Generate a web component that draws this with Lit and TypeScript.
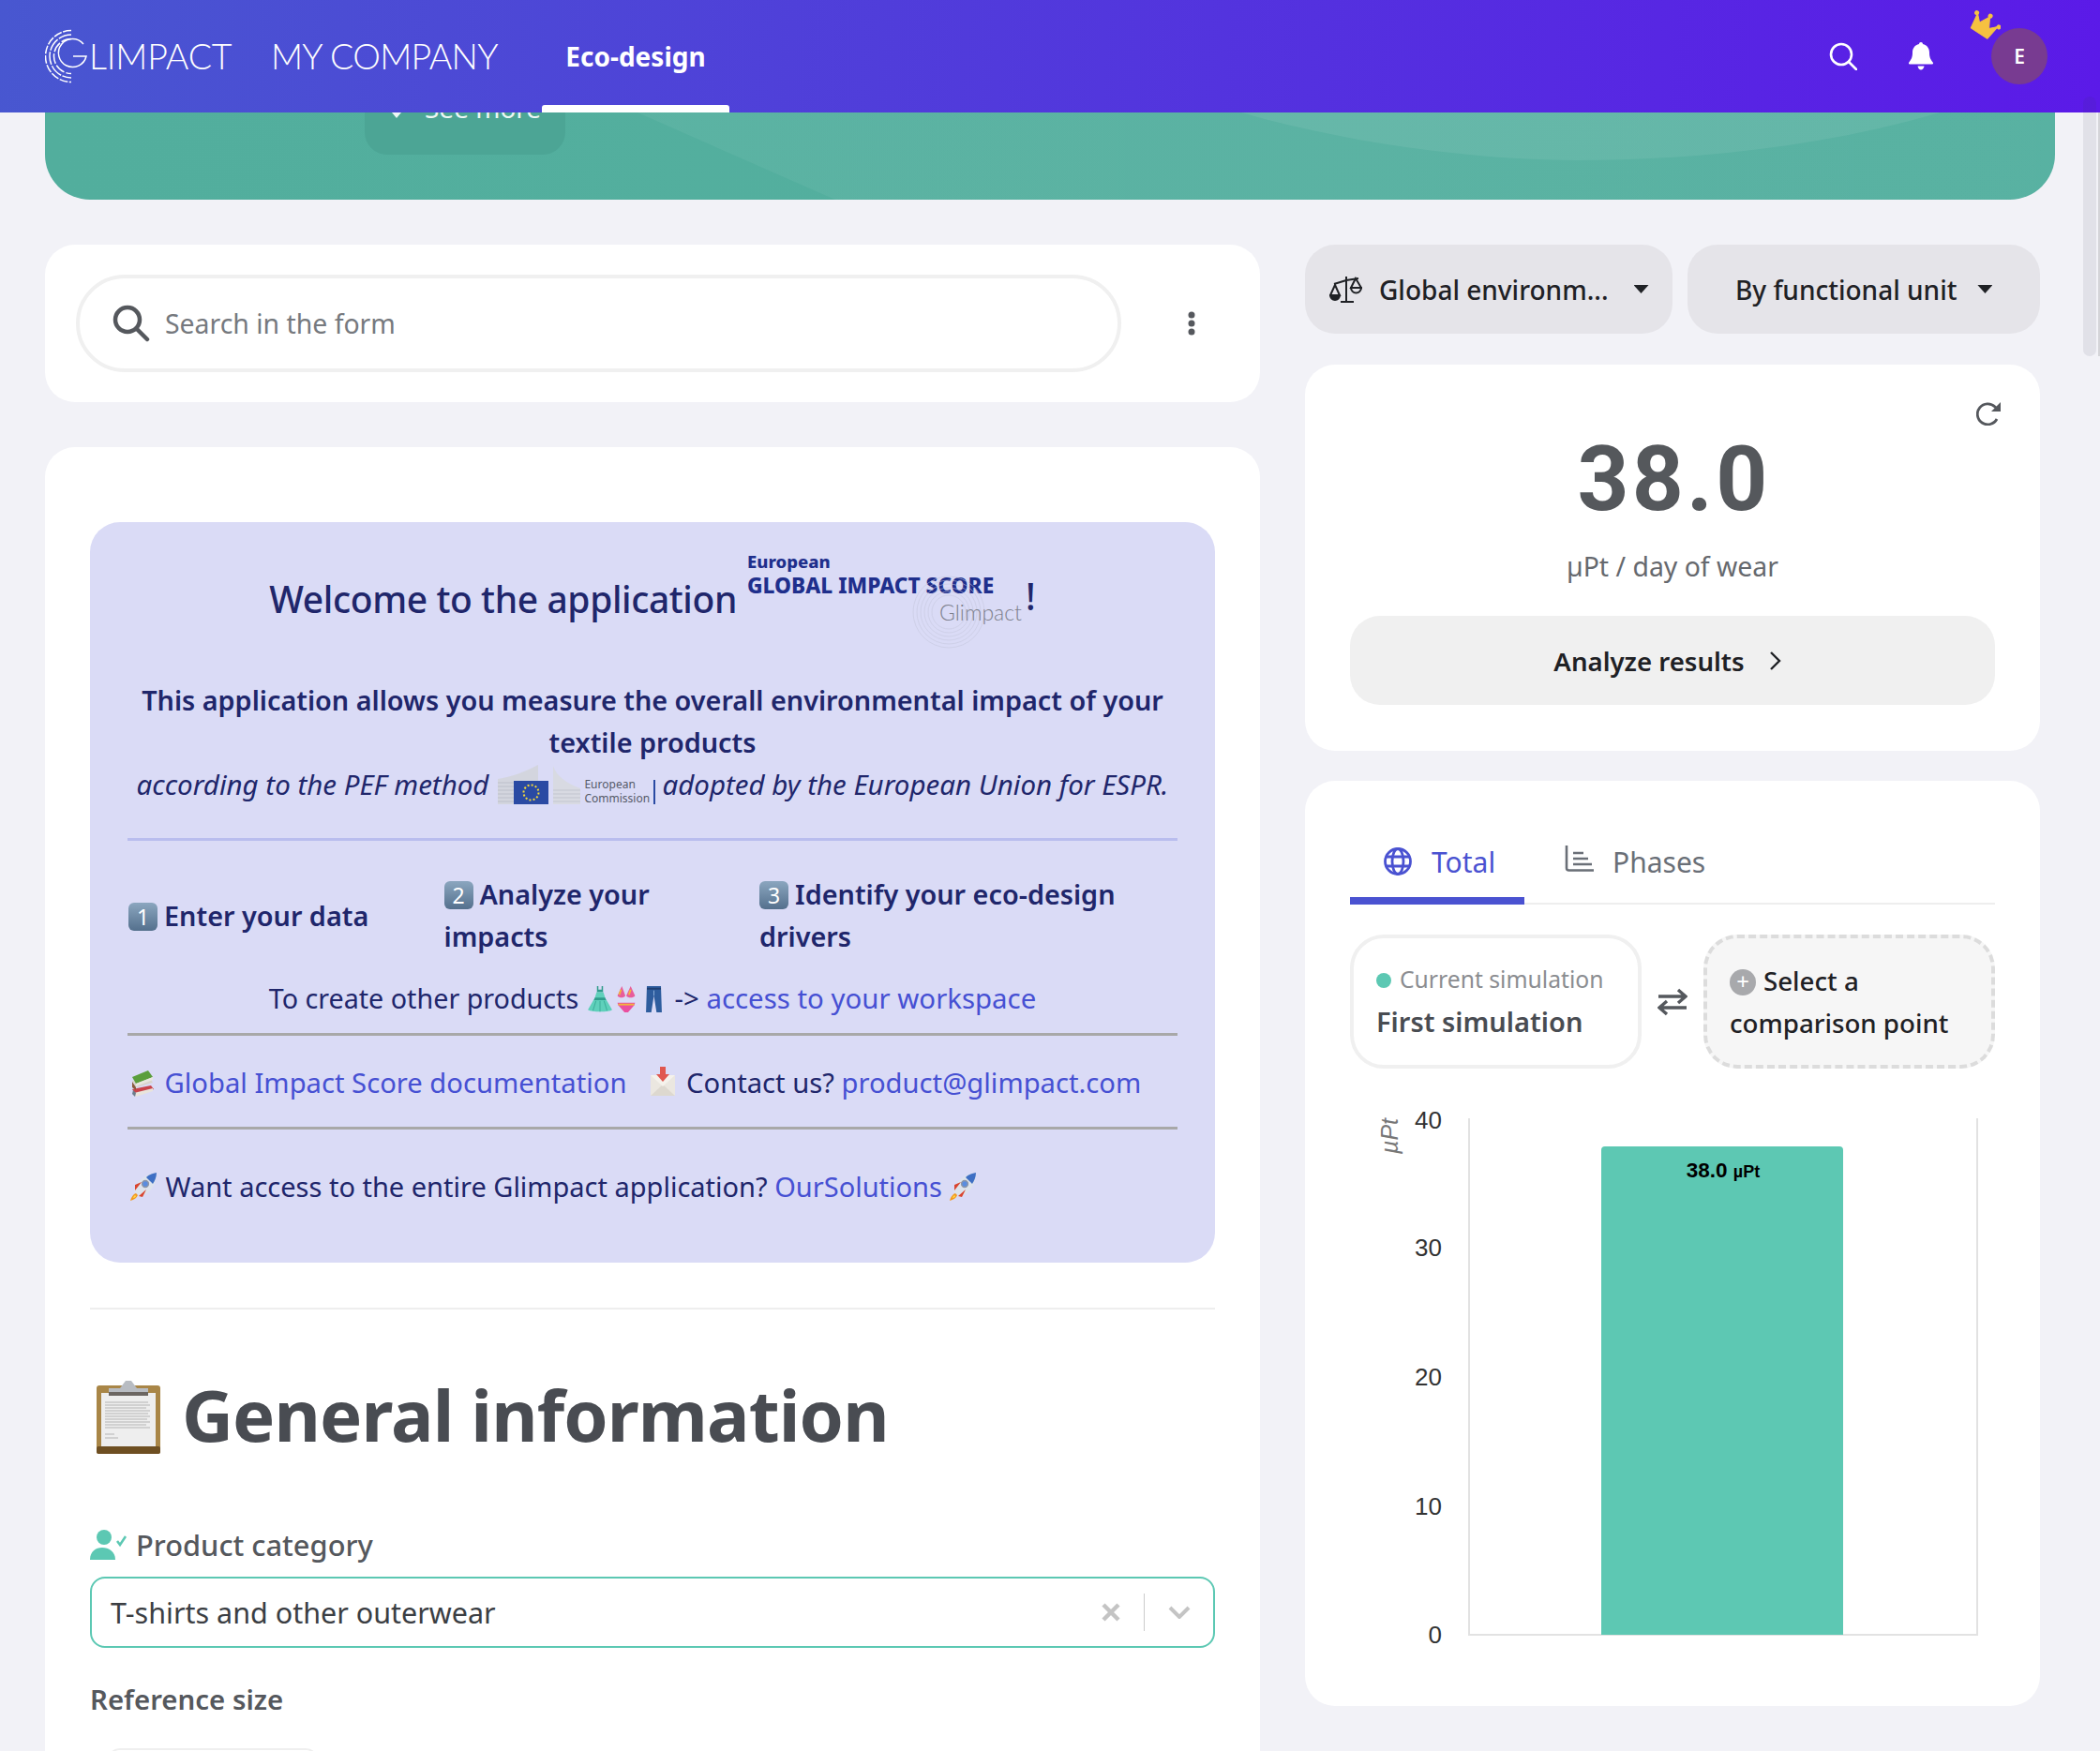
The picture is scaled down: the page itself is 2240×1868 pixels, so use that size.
import { LitElement, html, css, svg } from "lit";
import { customElement } from "lit/decorators.js";

const keycap = (n: string) => html`<span class="key">${n}</span>`;

const books = html`<svg class="emo" width="30" height="30" viewBox="0 0 30 30"><path d="M3 21l20-4 3 4-19 6z" fill="#c9434a"/><path d="M5 25l20-5 0 3-18 6z" fill="#e8e4dc"/><path d="M3 26l3 3 1-4-3-3z" fill="#6d7d8c"/><path d="M3 12l19-3 3 5-18 5z" fill="#d8d4cc"/><path d="M3 13l4 6 0 3-4-3z" fill="#8a5a3c"/><path d="M3 8L20 1l5 7-18 7z" fill="#5a9e3c"/><path d="M7 15l18-7 0 3-18 7z" fill="#e8e6df"/></svg>`;
const envelope = html`<svg class="emo" width="34" height="34" viewBox="0 0 34 34"><rect x="4" y="10" width="26" height="22" rx="1" fill="#ebe7e0"/><path d="M4 32l13-12 13 12z" fill="#ddd8cf"/><path d="M4 10l13 12 13-12z" fill="#f5f2ec"/><path d="M14 1h6v8h4l-7 8-7-8h4z" fill="#e0574f"/></svg>`;
const rocket = html`<svg class="emo" width="31" height="32" viewBox="0 0 31 32"><path d="M5 21C7 11 15 3 29 1c0 14-8 22-17 26z" fill="#dde3ec"/><path d="M29 1c-6 1-9 3-11 5 2 2 5 5 7 7 2-3 4-7 4-12z" fill="#3e6fc4"/><circle cx="17" cy="13" r="3.400" fill="#5a8de0" stroke="#8c97a8" stroke-width="1.500"/><path d="M6 14l7-3-7 9zM14 27l4-8-8 7z" fill="#d9442f"/><path d="M7 23c-3 1-5 4-6 8 4-1 7-3 8-6z" fill="#f39a1f"/><path d="M6 25c-1 1-2 2-2 3 1 0 3-1 3-2z" fill="#ffdb4d"/></svg>`;
const dress = html`<svg class="emo e1" width="28" height="30" viewBox="0 0 26 32" preserveAspectRatio="none"><path d="M10 1v7h6V1h-1.400v4h-3.200V1z" fill="#2f9c8c"/><path d="M9.600 8h6.800l1.600 6 7 14c-3 3-20 3-24 0l7-14z" fill="#5fd0bb"/><path d="M8 14h10l1 3H7z" fill="#2f9c8c"/><path d="M9 18l-3 11M17 18l3 11M13 18v12" stroke="#3fb09c" fill="none"/></svg>`;
const bikini = html`<svg class="emo e2" width="24" height="30" viewBox="0 0 24 32"><path d="M7 1 2 12c2 3 7 3 9 0zM17 1l-5 11c2 3 8 3 10 0z" fill="#e85d9b"/><path d="M6 5 4 11M17 5l-2 6" stroke="#f2b53c" stroke-width="2"/><path d="M2 20h20l-1 3-7 8h-4l-7-8z" fill="#ea4f9f"/><path d="M3 22h18" stroke="#f2b53c" stroke-width="2"/></svg>`;
const jeans = html`<svg class="emo e3" width="19" height="30" viewBox="0 0 20 32"><path d="M2 1h16l1 30h-6l-3-19-3 19H1z" fill="#2e5d9e"/><path d="M2 4h16" stroke="#1f3f70" stroke-width="2"/><path d="M10 6v6" stroke="#8db0dc"/></svg>`;
const clipboard = html`<svg class="clip" width="70" height="80" viewBox="0 0 70 80"><rect x="1" y="6" width="68" height="73" rx="3" fill="#a98647"/><rect x="1" y="71" width="68" height="8" rx="2" fill="#6e4f22"/><rect x="6" y="14" width="58" height="57" fill="#eeeeee"/><path d="M10 24h46M10 27h48M10 30h44M10 33h48M10 36h46M10 39h48M10 42h45M10 45h48M10 48h44M10 51h48M10 58h10M10 62h14" stroke="#b4b4b4" stroke-width="1.200"/><path d="M14 16v-7h12l6-8h6l6 8h12v7z" fill="#b8bcc2"/><rect x="14" y="13" width="42" height="4" fill="#6b6662"/></svg>`;
const ecLogo = html`<svg class="eclogo" width="88" height="44" viewBox="0 0 88 44"><path d="M0 16C14 14 30 8 43 1V43H0z" fill="#d3d5de"/><path d="M0 20h43M0 24h43M0 28h43M0 32h43M0 36h43M0 40h43" stroke="#bcbfca"/><path d="M59 2c3 10 13 18 29 24v17H59z" fill="#d8dae2"/><path d="M59 28h29M59 32h29M59 36h29M59 40h29" stroke="#c2c5cf"/><rect x="17" y="18" width="37" height="25" fill="#2a4aa3"/><circle cx="35.500" cy="30.500" r="8" fill="none" stroke="#f3d83a" stroke-width="2" stroke-dasharray="2 2.180"/></svg>`;

@customElement("app-root")
export class AppRoot extends LitElement {
  static styles = css`
    :host { display: block; height: 1868px; overflow: hidden; position: relative; background: #f2f2f7; color: #20266b;
      font-family: "Noto Sans", "Open Sans", sans-serif; font-size: 29.400px; }
    * { box-sizing: border-box; }
    a { color: #4650d3; text-decoration: none; }
    .emo { vertical-align: -5px; }
    .e1 { margin-left: 1px; }
    .e2 { margin-left: 2px; }
    .e3 { margin-left: 8px; margin-right: 5px; }

    .top { height: 120px; display: flex; align-items: center; color: #fff; background: linear-gradient(95deg, #4857d0 0%, #5b1ae8 100%); position: relative; z-index: 2; padding-left: 48px; }
    .logo { display: flex; align-items: center; width: 241px; }
    .logo span { font: 300 37.500px/1 "Lato", sans-serif; letter-spacing: -.2px; }
    .company { font: 300 37.500px/1 "Lato", sans-serif; letter-spacing: -.7px; width: 289px; white-space: nowrap; }
    .tab { width: 200px; height: 120px; display: flex; align-items: center; justify-content: center; font-weight: 700; font-size: 28px; position: relative; }
    .tab::after { content: ""; position: absolute; left: 0; right: 0; bottom: 0; height: 8px; background: #fff; border-radius: 3px 3px 0 0; }
    .spacer { flex: 1; }
    .topic { display: flex; }
    .ic-search { margin-right: 55px; }
    .ic-bell { margin-right: 62px; }
    .avatar { width: 60px; height: 60px; border-radius: 50%; background: #783b91; display: flex; align-items: center; justify-content: center; font-size: 21px; font-weight: 600; position: relative; margin-right: 56px; }
    .crown { position: absolute; left: -26px; top: -20px; }

    .hero { height: 93px; margin: 0 48px; border-radius: 0 0 48px 48px; background: linear-gradient(90deg, #52ae9d, #55b0a0); position: relative; overflow: hidden; }
    .hero svg { position: absolute; left: 0; top: 0; }
    .more { position: absolute; left: 341px; top: 0; width: 214px; height: 45px; background: #4ca595; border-radius: 0 0 24px 24px; color: #eef8f5; font-size: 28px; line-height: 28px; overflow: hidden; }
    .more span { position: absolute; left: 64px; top: -19px; }
    .more i { position: absolute; left: 29px; top: 0; width: 10px; height: 6px; background: #eef8f5; clip-path: polygon(0 0, 100% 0, 50% 100%); }

    .grid { display: grid; grid-template-columns: 1296px 784px; column-gap: 48px; padding: 48px 0 0 48px; align-items: start; }
    .col { display: flex; flex-direction: column; }
    .card { background: #fff; border-radius: 32px; }

    .searchcard { display: flex; align-items: center; height: 168px; padding: 0 33px; margin-bottom: 48px; }
    .input { width: 1115px; height: 104px; border: 4px solid #f0f0f0; border-radius: 52px; display: flex; align-items: center; padding-left: 35px; color: #76797e; font-size: 28.400px; gap: 16px; }
    .kebab { margin-left: 70px; display: flex; }

    .main { padding: 80px 48px 0; height: 1500px; }
    .welcome { background: #dadbf6; border-radius: 32px; padding: 0 40px 59px; height: 790px; }
    .hd { height: 167px; display: flex; justify-content: center; align-items: flex-start; padding: 32px 0 0 0; }
    .hd h2 { margin: 25px 11px 0 0; font-size: 39px; line-height: 50px; font-weight: 500; white-space: nowrap; letter-spacing: -.4px; }
    .gis { width: 300px; height: 90px; position: relative; color: #1f2f8c; font-weight: 800; }
    .gis b { display: block; font-size: 18.500px; line-height: 20px; font-weight: 800; }
    .gis strong { display: block; font-size: 22.700px; line-height: 28px; margin-top: 2px; font-weight: 800; white-space: nowrap; }
    .gis .gl { position: absolute; left: 205px; top: 51px; color: #7d808c; font: 300 23px/26px "Lato", sans-serif; }
    .gis svg { position: absolute; left: 175px; top: 24px; opacity: .55; }
    .bang { font-size: 39px; line-height: 50px; margin-top: 22px; margin-left: -3px; font-weight: 500; }
    .c { text-align: center; line-height: 45px; white-space: nowrap; }
    .bold { font-weight: 600; font-size: 28.800px; }
    .ital { font-style: italic; font-size: 29.500px; display: flex; justify-content: center; align-items: center; height: 45px; white-space: nowrap; }
    .ital svg { margin: 0 4px 0 10px; }
    .ectxt { font-size: 12px; line-height: 15px; font-style: normal; color: #555a68; width: 74px; padding-top: 14px; white-space: nowrap; }
    .ecbar { width: 2px; height: 26px; background: #2a4aa3; margin: 16px 7px 0 0; }
    hr { border: 0; margin: 0; height: 3px; }
    .h1 { background: #b9bdee; margin-top: 35px; }
    .h2 { background: #a8a8a8; }
    .steps { display: flex; margin-top: 34px; align-items: center; font-weight: 600; font-size: 28.800px; line-height: 45px; white-space: nowrap; }
    .steps div { width: 336.500px; padding-left: 1px; }
    .key { display: inline-block; width: 31px; height: 30px; border-radius: 6px; background: linear-gradient(#8ba6bf, #54708d); color: #fff; font-size: 23px; line-height: 30px; text-align: center; font-weight: 400; vertical-align: 1px; margin-right: 7px; }
    .row { line-height: 45px; white-space: nowrap; padding-left: 2px; }
    .doc { font-size: 29.200px; }
    .rk { font-size: 29px; }
    .plain { font-size: 28.700px; }
    .env { margin-left: 22px; }

    .sep { height: 2px; background: #eeeeee; margin-top: 48px; }
    .title { display: flex; align-items: center; height: 100px; margin-top: 61px; gap: 22px; padding-left: 6px; color: #494c52; font-size: 76px; letter-spacing: -.9px; font-weight: 700; white-space: nowrap; }
    .title svg { margin-top: 8px; }
    .lab { display: flex; align-items: center; gap: 8px; margin-top: 70px; height: 40px; font-size: 30.800px; font-weight: 500; color: #55585d; }
    .select { height: 76px; margin-top: 14px; border: 2px solid #5cc8b3; border-radius: 16px; display: flex; align-items: center; padding-left: 20px; color: #3b3e43; font-size: 30.500px; }
    .select .txt { flex: 1; }
    .select .v { width: 1px; height: 40px; background: #cccccc; margin: 0 25px 0 24px; }
    .select .x, .select .ch { display: flex; }
    .select .ch { margin-right: 24px; }
    .ref { margin-top: 35px; line-height: 40px; font-weight: 600; color: #55585d; }
    .pill { margin: 32px 0 0 18px; width: 226px; height: 40px; border: 2px solid #efefef; border-radius: 14px; }

    .drops { display: flex; gap: 16px; margin-bottom: 33px; font-size: 28px; }
    .drop { height: 95px; background: #e5e4e9; border-radius: 32px; display: flex; align-items: center; font-weight: 500; color: #1f2125; white-space: nowrap; }
    .d1 { width: 392px; padding-left: 26px; }
    .d1 .t { margin-left: 18px; }
    .d2 { width: 376px; padding-left: 51px; }
    .caret { width: 16px; height: 9px; background: #1f2125; clip-path: polygon(0 0, 100% 0, 50% 100%); }
    .d1 .caret { margin-left: 27px; }
    .d2 .caret { margin-left: 22px; }

    .score { height: 412px; padding: 79px 48px 0; margin-bottom: 32px; text-align: center; position: relative; font-size: 28px; }
    .refresh { position: absolute; right: 40px; top: 39px; display: flex; }
    .num { font: 700 96px/86px "Roboto", sans-serif; color: #55585c; letter-spacing: 3.200px; padding-left: 3px; }
    .unit { margin-top: 30px; line-height: 40px; color: #66696e; font-size: 28.400px; }
    .btn { height: 95px; margin-top: 33px; background: #f0f0f0; border-radius: 32px; display: flex; align-items: center; justify-content: center; gap: 26px; padding-right: 10px; font-weight: 600; font-size: 27.600px; color: #1f2125; }

    .chart { height: 987px; padding: 0 48px; }
    .tabs { display: flex; height: 132px; border-bottom: 2px solid #eeeeee; padding-top: 60px; font-size: 30px; }
    .t1 { width: 186px; height: 72px; padding: 9px 0 0 36px; border-bottom: 8px solid #4a52d1; color: #4a52d1; display: flex; gap: 21px; align-items: flex-start; line-height: 36px; }
    .t1 svg { margin-top: 2px; }
    .t2 { margin-left: 43px; padding-top: 9px; color: #6a6f77; display: flex; gap: 20px; align-items: flex-start; line-height: 36px; }
    .sims { display: flex; align-items: center; margin-top: 32px; height: 143px; }
    .sim { width: 311px; height: 143px; border-radius: 36px; padding: 0 24px; display: flex; flex-direction: column; justify-content: center; }
    .s1 { border: 4px solid #f0f0f0; }
    .s2 { border: 4px dashed #dcdcdc; background: #f6f6f6; color: #1f2125; font-weight: 500; font-size: 27.700px; line-height: 45px; white-space: nowrap; }
    .dot { display: inline-block; width: 16px; height: 16px; border-radius: 50%; background: #5cc8b3; margin-right: 9px; }
    .cur { color: #8b8d91; font-size: 24.700px; line-height: 42px; white-space: nowrap; margin: -3px 0 3px; }
    .first { color: #494c52; font-weight: 600; font-size: 29px; line-height: 42px; white-space: nowrap; }
    .swap { width: 66px; display: flex; justify-content: center; }
    .plus { display: inline-block; width: 28px; height: 28px; border-radius: 50%; background: #a8a9ac; color: #fff; text-align: center; font-size: 24px; line-height: 26px; vertical-align: 1px; margin-right: 8px; font-weight: 400; }
    .plot { display: block; margin: 37px 0 0 -48px; }

    .thumb { position: absolute; left: 2222px; top: 103px; width: 14px; height: 277px; border-radius: 7px; background: rgba(60, 50, 90, .09); z-index: 3; }
    .edge { position: absolute; left: 2238px; top: 120px; width: 2px; height: 260px; background: #d4d4d8; z-index: 3; }
  `;

  render() {
    return html`
      <header class="top">
        <div class="logo">
          <svg width="47" height="58" viewBox="0 0 47 58" fill="none" stroke="#fff" stroke-width="1.500">
            <path d="M28 1.500A27.500 27.500 0 1 0 28 56.500" stroke-dasharray="9 1.500"/>
            <path d="M28 6A23 23 0 1 0 28 52" stroke-dasharray="14 1.500"/>
            <path d="M28 10.500A18.500 18.500 0 1 0 28 47.500" stroke-dasharray="11 2"/>
            <path d="M41 16A15 15 0 1 0 44 29H30"/>
          </svg>
          <span>LIMPACT</span>
        </div>
        <div class="company">MY COMPANY</div>
        <div class="tab">Eco-design</div>
        <div class="spacer"></div>
        <svg class="topic ic-search" width="30" height="30" viewBox="0 0 30 30" fill="none" stroke="#fff" stroke-width="2.600" stroke-linecap="round"><circle cx="13" cy="13" r="11"/><path d="M21 21l8 8"/></svg>
        <svg class="topic ic-bell" width="26" height="30" viewBox="0 0 26 30" fill="#fff"><path d="M13 0c1.200 0 2 .8 2 2 4.500 1 7 4.500 7 9 0 5 1 7 4 11 .3.700 0 1.500-1 1.500H1c-1 0-1.300-.8-1-1.500 3-4 4-6 4-11 0-4.500 2.500-8 7-9 0-1.200.8-2 2-2z"/><path d="M9.500 25.500h7c-.5 2.500-2 4-3.500 4s-3-1.500-3.500-4z"/></svg>
        <div class="avatar">E
          <svg class="crown" width="36" height="36" viewBox="0 0 36 36" fill="#f6c141"><g transform="rotate(33 18 18)"><path d="M5 10l7 7 6-11 6 11 7-7-2.500 17H7.500z" stroke="#f6c141" stroke-linejoin="round"/><circle cx="4" cy="10" r="2.500"/><circle cx="18" cy="5" r="2.500"/><circle cx="32" cy="10" r="2.500"/></g></svg>
        </div>
      </header>

      <section class="hero">
        <svg width="2144" height="93" viewBox="0 0 2144 93">
          <defs><linearGradient id="hg" x1="0" x2="1" y1="0" y2="0"><stop offset="0" stop-color="#fff" stop-opacity=".05"/><stop offset=".55" stop-color="#fff" stop-opacity=".04"/><stop offset="1" stop-color="#fff" stop-opacity=".02"/></linearGradient></defs>
          <path d="M632 0 L843 93 H2144 V0z" fill="url(#hg)"/>
          <path d="M1276 0 C1400 36 1540 51 1634 51 C1760 51 1900 36 2021 0z" fill="#fff" opacity=".07"/>
        </svg>
        <div class="more"><i></i><span>See more</span></div>
      </section>

      <div class="grid">
        <div class="col">
          <div class="card searchcard">
            <div class="input">
              <svg width="40" height="40" viewBox="0 0 40 40" fill="none" stroke="#55585d" stroke-width="4.500" stroke-linecap="round"><circle cx="16" cy="16" r="13"/><path d="M26 26l11 11"/></svg>
              Search in the form
            </div>
            <svg class="kebab" width="10" height="26" viewBox="0 0 10 26" fill="#55585d"><circle cx="5" cy="4" r="3.500"/><circle cx="5" cy="13" r="3.500"/><circle cx="5" cy="22" r="3.500"/></svg>
          </div>

          <div class="card main">
            <div class="welcome">
              <div class="hd">
                <h2>Welcome to the application</h2>
                <div class="gis">
                  <svg width="80" height="80" viewBox="0 0 80 80" fill="none" stroke="#c6c8de" stroke-width="1"><circle cx="40" cy="40" r="38"/><circle cx="40" cy="40" r="34"/><circle cx="40" cy="40" r="30"/><circle cx="40" cy="40" r="26"/><circle cx="40" cy="40" r="22"/><circle cx="40" cy="40" r="18"/></svg>
                  <b>European</b>
                  <strong>GLOBAL IMPACT SCORE</strong>
                  <span class="gl">Glimpact</span>
                </div>
                <div class="bang">!</div>
              </div>
              <div class="c bold">This application allows you measure the overall environmental impact of your<br>textile products</div>
              <div class="ital">according to the PEF method ${ecLogo}<span class="ectxt">European<br>Commission</span><span class="ecbar"></span>adopted by the European Union for ESPR.</div>
              <hr class="h1">
              <div class="steps">
                <div>${keycap("1")}Enter your data</div>
                <div>${keycap("2")}Analyze your<br>impacts</div>
                <div>${keycap("3")}Identify your eco-design<br>drivers</div>
              </div>
              <div class="c" style="margin-top:21px"><span class="plain">To create other products</span> ${dress}${bikini}${jeans} -&gt; <a>access to your workspace</a></div>
              <hr class="h2" style="margin-top:14px">
              <div class="row doc" style="margin-top:28px">${books} <a>Global Impact Score documentation</a><span class="env">${envelope}</span> Contact us? <a>product@glimpact.com</a></div>
              <hr class="h2" style="margin-top:24px">
              <div class="row rk" style="margin-top:38px">${rocket} Want access to the entire Glimpact application? <a>OurSolutions</a> ${rocket}</div>
            </div>

            <div class="sep"></div>
            <div class="title">${clipboard}General information</div>
            <div class="lab">
              <svg width="41" height="32" viewBox="0 0 41 32" fill="#5cc8b3"><circle cx="15" cy="8" r="8"/><path d="M0 32c0-9 6-13 13-13s14 4 14 13z"/><path d="M29 12l3 4 6-9" fill="none" stroke="#5cc8b3" stroke-width="2.500"/></svg>
              Product category
            </div>
            <div class="select">
              <span class="txt">T-shirts and other outerwear</span>
              <svg class="x" width="22" height="22" viewBox="0 0 22 22" stroke="#c4c4c4" stroke-width="4.500" fill="none"><path d="M3 3l16 16M19 3L3 19"/></svg>
              <span class="v"></span>
              <svg class="ch" width="24" height="14" viewBox="0 0 24 14" stroke="#c4c4c4" stroke-width="4" fill="none"><path d="M2 2l10 10L22 2"/></svg>
            </div>
            <div class="ref">Reference size</div>
            <div class="pill"></div>
          </div>
        </div>

        <div class="col">
          <div class="drops">
            <div class="drop d1">
              <svg width="35" height="30" viewBox="0 0 35 30" fill="none" stroke="#1f2125" stroke-width="2"><path d="M5 9l13-4 13-2M18 1v27M12 28h14"/><path d="M6 10l-5 11h10z"/><path d="M1 21a5 5 0 0 0 10 0z" fill="#1f2125"/><path d="M28 3l-5 10h11z"/><path d="M23 13a5.500 5.500 0 0 0 11 0z"/></svg>
              <span class="t">Global environm...</span><span class="caret"></span>
            </div>
            <div class="drop d2"><span>By functional unit</span><span class="caret"></span></div>
          </div>

          <div class="card score">
            <svg class="refresh" width="28" height="26" viewBox="0 0 28 26" fill="none" stroke="#55585d" stroke-width="2.800"><path d="M22 19A11 11 0 1 1 20 6l4 4"/><path d="M26 1v10H16z" fill="#55585d" stroke="none"/></svg>
            <div class="num">38.0</div>
            <div class="unit">µPt / day of wear</div>
            <div class="btn">
              <span>Analyze results</span>
              <svg width="14" height="22" viewBox="0 0 14 22" fill="none" stroke="#1f2125" stroke-width="2.400"><path d="M2 2l9 9-9 9"/></svg>
            </div>
          </div>

          <div class="card chart">
            <div class="tabs">
              <div class="t1">
                <svg width="30" height="30" viewBox="0 0 30 30" fill="none" stroke="#4a52d1" stroke-width="2.800"><circle cx="15" cy="15" r="13.500"/><ellipse cx="15" cy="15" rx="6" ry="13.500"/><path d="M2.500 10h25M2.500 20h25"/></svg>
                Total
              </div>
              <div class="t2">
                <svg width="31" height="28" viewBox="0 0 31 28" fill="none" stroke="#6a6f77" stroke-width="2.600"><path d="M2 0v24q0 2.500 2.500 2.500H31M9 8h11M9 14h16M9 20h20"/></svg>
                Phases
              </div>
            </div>
            <div class="sims">
              <div class="sim s1">
                <div class="cur"><span class="dot"></span>Current simulation</div>
                <div class="first">First simulation</div>
              </div>
              <div class="swap">
                <svg width="32" height="30" viewBox="0 0 32 30" fill="none" stroke="#55585d" stroke-width="3.400"><path d="M1 9h28M22 2l8 7-8 7M31 21H3M10 14l-8 7 8 7"/></svg>
              </div>
              <div class="sim s2">
                <div><span class="plus">+</span>Select a</div>
                <div>comparison point</div>
              </div>
            </div>
            ${this.plot()}
          </div>
        </div>
      </div>
      <div class="thumb"></div>
      <div class="edge"></div>
    `;
  }

  plot() {
    const ticks: [string, number][] = [["40", 1194], ["30", 1330], ["20", 1468], ["10", 1606], ["0", 1743]];
    const oy = 1176, ox = 1392;
    return html`<svg class="plot" width="784" height="590" viewBox="0 0 784 590" font-family="Liberation Sans, sans-serif">
      ${svg`
        <path d="M${1567 - ox} ${1192 - oy}V${1743 - oy}H${2109 - ox}V${1192 - oy}" fill="none" stroke="#e2e2e2" stroke-width="2"/>
        <path d="M${1708 - ox} ${1743 - oy}V${1226 - oy}q0-4 4-4H${1962 - ox}q4 0 4 4V${1743 - oy}z" fill="#5dc8b3"/>
        ${ticks.map(([t, y]) => svg`<text x="${1538 - ox}" y="${y - oy + 9}" text-anchor="end" font-size="26" fill="#333">${t}</text>`)}
        <text transform="translate(${1491 - ox} ${1211 - oy}) rotate(-90)" text-anchor="middle" font-size="25" font-style="italic" fill="#777">µPt</text>
        <text x="${1838 - ox}" y="${1255 - oy}" text-anchor="middle" font-weight="700" font-size="22.500" fill="#000">38.0 <tspan font-size="18">µPt</tspan></text>
      `}
    </svg>`;
  }
}
